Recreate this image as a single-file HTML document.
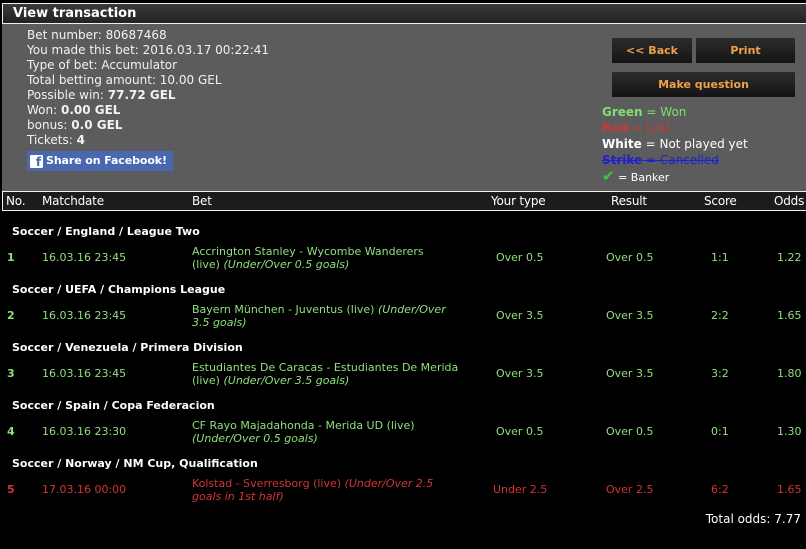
<!DOCTYPE html>
<html><head><style>
*{margin:0;padding:0;box-sizing:border-box}
body{width:806px;height:549px;background:#000;font-family:"DejaVu Sans","Liberation Sans",sans-serif;color:#fff;position:relative;overflow:hidden}
.a{position:absolute;white-space:nowrap}
#hdr{left:2px;top:3px;width:804px;height:21px;border:1px solid #eee;border-right:none;background:linear-gradient(#3a3a3a,#222);font-weight:bold;font-size:13px;line-height:19px;padding-left:10px}
#panel{left:2px;top:24px;width:804px;height:167px;background:#5c5c5c}
.info{font-size:12px;line-height:15px;left:27px;top:28px;color:#f2f2f2}
.fb{left:27px;top:151px;width:146px;height:20px;background:#4a68b0;font-size:11px;font-weight:bold;line-height:20px;padding-left:3px;letter-spacing:-0.1px}
.fb i{display:inline-block;width:13px;height:13px;background:#fff;color:#4a68b0;font-style:normal;font-size:12px;line-height:15px;text-align:right;padding-right:2px;vertical-align:-2px;margin-right:3px;border-radius:1px}
.btn{background:linear-gradient(#2c2c2c,#141414);color:#f0a04a;font-size:11px;font-weight:bold;text-align:center;line-height:25px;height:25px}
.leg{left:602px;font-size:12px;line-height:16px}
#th{left:2px;top:191px;width:804px;height:20px;border:1px solid #eee;border-right:none;background:#1c1c1c;font-size:12px;line-height:18px;letter-spacing:-0.2px}
.cat{left:12px;font-size:11px;font-weight:bold}
.r{font-size:11px;line-height:13px}
.n{font-weight:bold}
.g{color:#8fe07e}.rd{color:#d03535}
</style></head><body>
<div class="a" id="hdr">View transaction</div>
<div class="a" id="panel"></div>
<div class="a info">Bet number: 80687468<br>You made this bet: 2016.03.17 00:22:41<br>Type of bet: Accumulator<br>Total betting amount: 10.00 GEL<br>Possible win: <b>77.72 GEL</b><br>Won: <b>0.00 GEL</b><br>bonus: <b>0.0 GEL</b><br>Tickets: <b>4</b></div>
<div class="a fb"><i>f</i>Share on Facebook!</div>
<div class="a btn" style="left:612px;top:38px;width:80px">&lt;&lt; Back</div>
<div class="a btn" style="left:696px;top:38px;width:99px">Print</div>
<div class="a btn" style="left:612px;top:72px;width:183px">Make question</div>
<div class="a leg" style="top:104px;color:#7fe070"><b>Green</b> = Won</div>
<div class="a leg" style="top:120px;color:#c43a3a"><b>Red</b> = Lost</div>
<div class="a leg" style="top:136px"><b>White</b> = Not played yet</div>
<div class="a leg" style="top:152px;color:#2020d0;text-decoration:line-through"><b>Strike</b> = Cancelled</div>
<div class="a leg" style="top:168px;font-size:11px"><span style="color:#3c3;font-weight:bold;font-size:15px">✔</span> = Banker</div>
<div class="a" id="th"><span class="a" style="left:3px">No.</span><span class="a" style="left:39px">Matchdate</span><span class="a" style="left:189px">Bet</span><span class="a" style="left:488px">Your type</span><span class="a" style="left:608px">Result</span><span class="a" style="left:701px">Score</span><span class="a" style="left:771px">Odds</span></div>

<div class="a cat" style="top:225px">Soccer / England / League Two</div>
<div class="a r g n" style="left:7px;top:251px">1</div><div class="a r g" style="left:42px;top:251px">16.03.16 23:45</div>
<div class="a r g" style="left:192px;top:245px">Accrington Stanley - Wycombe Wanderers<br>(live) <i>(Under/Over 0.5 goals)</i></div>
<div class="a r g" style="left:496px;top:251px">Over 0.5</div><div class="a r g" style="left:606px;top:251px">Over 0.5</div><div class="a r g" style="left:711px;top:251px">1:1</div><div class="a r g" style="left:777px;top:251px">1.22</div>

<div class="a cat" style="top:283px">Soccer / UEFA / Champions League</div>
<div class="a r g n" style="left:7px;top:309px">2</div><div class="a r g" style="left:42px;top:309px">16.03.16 23:45</div>
<div class="a r g" style="left:192px;top:303px">Bayern München - Juventus (live) <i>(Under/Over</i><br><i>3.5 goals)</i></div>
<div class="a r g" style="left:496px;top:309px">Over 3.5</div><div class="a r g" style="left:606px;top:309px">Over 3.5</div><div class="a r g" style="left:711px;top:309px">2:2</div><div class="a r g" style="left:777px;top:309px">1.65</div>

<div class="a cat" style="top:341px">Soccer / Venezuela / Primera Division</div>
<div class="a r g n" style="left:7px;top:367px">3</div><div class="a r g" style="left:42px;top:367px">16.03.16 23:45</div>
<div class="a r g" style="left:192px;top:361px">Estudiantes De Caracas - Estudiantes De Merida<br>(live) <i>(Under/Over 3.5 goals)</i></div>
<div class="a r g" style="left:496px;top:367px">Over 3.5</div><div class="a r g" style="left:606px;top:367px">Over 3.5</div><div class="a r g" style="left:711px;top:367px">3:2</div><div class="a r g" style="left:777px;top:367px">1.80</div>

<div class="a cat" style="top:399px">Soccer / Spain / Copa Federacion</div>
<div class="a r g n" style="left:7px;top:425px">4</div><div class="a r g" style="left:42px;top:425px">16.03.16 23:30</div>
<div class="a r g" style="left:192px;top:419px">CF Rayo Majadahonda - Merida UD (live)<br><i>(Under/Over 0.5 goals)</i></div>
<div class="a r g" style="left:496px;top:425px">Over 0.5</div><div class="a r g" style="left:606px;top:425px">Over 0.5</div><div class="a r g" style="left:711px;top:425px">0:1</div><div class="a r g" style="left:777px;top:425px">1.30</div>

<div class="a cat" style="top:457px">Soccer / Norway / NM Cup, Qualification</div>
<div class="a r rd n" style="left:7px;top:483px">5</div><div class="a r rd" style="left:42px;top:483px">17.03.16 00:00</div>
<div class="a r rd" style="left:192px;top:477px">Kolstad - Sverresborg (live) <i>(Under/Over 2.5</i><br><i>goals in 1st half)</i></div>
<div class="a r rd" style="left:493px;top:483px">Under 2.5</div><div class="a r rd" style="left:606px;top:483px">Over 2.5</div><div class="a r rd" style="left:711px;top:483px">6:2</div><div class="a r rd" style="left:777px;top:483px">1.65</div>

<div class="a" style="right:5px;top:512px;font-size:12px">Total odds: 7.77</div>
</body></html>
